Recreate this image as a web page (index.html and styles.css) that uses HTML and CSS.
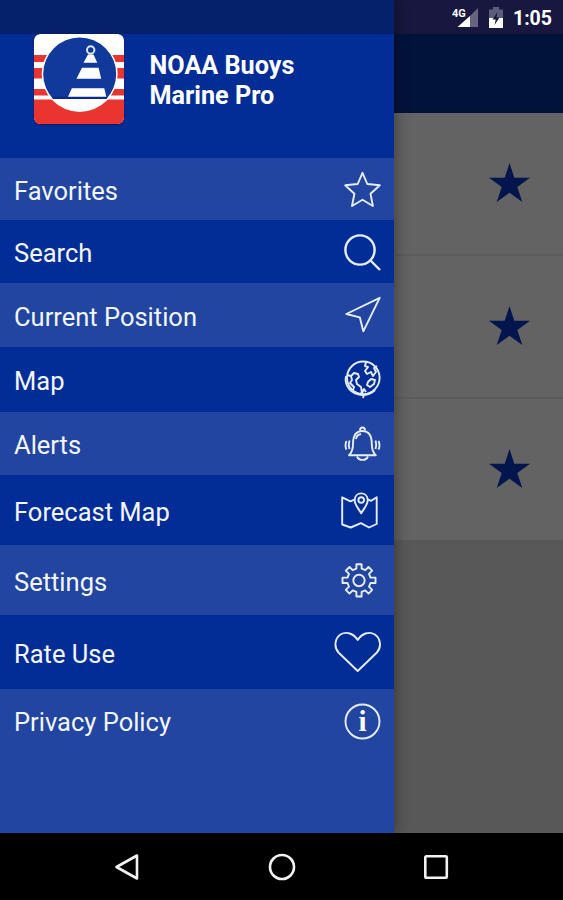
FILE: index.html
```html
<!DOCTYPE html>
<html lang="en">
<head>
  <meta charset="UTF-8">
  <title>NOAA Buoys Marine Pro</title>
  <meta name="viewport" content="width=device-width, initial-scale=1.0">
  <link rel="stylesheet" href="styles.css">
</head>
<body>

  <div class="screen">
    <div class="main">
      <div class="drawer">
        <div class="drawer-status"></div>
        <div class="drawer-header">
          <svg class="logo" viewBox="0 0 90 90">
            <defs>
              <clipPath id="tile"><rect width="90" height="90" rx="6"/></clipPath>
              <clipPath id="disc"><circle cx="45.700" cy="40" r="36.500"/></clipPath>
            </defs>
            <g clip-path="url(#tile)">
              <rect width="90" height="90" fill="#fff"/>
              <path d="M0 21h90v7H0zM0 34h90v10.500H0zM0 55h90v6.500H0zM0 65.500h90v25H0z" fill="#e93430"/>
              <circle cx="45.700" cy="40" r="38" fill="#fff"/>
              <g clip-path="url(#disc)">
                <rect width="90" height="65" fill="#10399b"/>
                <rect y="62.800" width="90" height="2.200" fill="#082a90"/>
              </g>
              <circle cx="56.700" cy="16" r="3.700" fill="none" stroke="#dfe6f7" stroke-width="2"/>
              <path d="M54 20.500h5.500l3.800 8.200H49.500zM48 33.700h16.600l2.600 11H42.500zM37.800 54.300h32.500l2 8.500H34z" fill="#fff"/>
            </g>
          </svg>
          <h1>NOAA Buoys<br>Marine Pro</h1>
        </div>

        <ul class="menu">
          <li class="item favorites">
            <span>Favorites</span>
            <svg class="icon" viewBox="0 0 48 48"><path d="M28.500 7.800l4.800 11.200 12.500 1.300-9.300 8.500 2.400 12.200-10.400-6.200-10.500 6.200 2.400-12.200-9.200-8.500 12.500-1.300z"/></svg>
          </li>
          <li class="item dark search">
            <span>Search</span>
            <svg class="icon bold" viewBox="0 0 48 48"><circle cx="26" cy="22" r="14.600"/><path d="M36.500 32.500l9.500 9.500"/></svg>
          </li>
          <li class="item position">
            <span>Current Position</span>
            <svg class="icon" viewBox="0 0 48 48"><path d="M45.700 6.800L12.300 23l13.500 3.300 3.500 14z"/></svg>
          </li>
          <li class="item dark map">
            <span>Map</span>
            <svg class="icon" viewBox="0 0 48 48">
              <circle cx="29.300" cy="21.800" r="16.300"/>
              <path d="M32 6l-1 4 3 1-3 4 2 3 4-2 2 4 3-4-2-4 3-2M34 26l3-3 4 1-1 4-4 3-3-2zM13 19l4 1 3-3 4 1 1 3-3 3 1 4 4 3 1 6 2-4 2 3M17 20l1 4-2 3 4 4-1 3"/>
              <path d="M12 20c-2 10 5 18 16 19 5 0 10-2 13-5M26 37l4 2-1 3"/>
            </svg>
          </li>
          <li class="item alerts">
            <span>Alerts</span>
            <svg class="icon" viewBox="0 0 48 48">
              <path d="M15 35.200c3-3 4-6 4-11 0-8 2.500-13.200 9.400-13.200s9.400 5.200 9.400 13.200c0 5 1 8 4 11z"/>
              <path d="M26 10.500c0-4 5-4 5 0M23 36.500c2 4.500 9 4.500 11 0M22 19c.5-3 2-4.500 5-5"/>
              <path d="M15.500 20.500c-1 3-1 6 0 8.500M12.500 21c-1.300 3-1.300 6 0 8.500M41.500 20.500c1 3 1 6 0 8.500M44.500 21c1.300 3 1.300 6 0 8.500"/>
            </svg>
          </li>
          <li class="item dark forecast">
            <span>Forecast Map</span>
            <svg class="icon" viewBox="0 0 48 48">
              <path d="M20.500 13.500l-4 1.800-8.300-4v27.200l8.500 3 10.300-4.300 8 4.300 7.700-3.500V11.300l-5.500 3.500-4-1.600"/>
              <path d="M27.200 27.300c-2-4-6.500-8-6.500-13 0-9.200 13-9.200 13 0 0 5-4.500 9-6.500 13z"/>
              <circle cx="27.200" cy="14" r="2.800"/>
            </svg>
          </li>
          <li class="item settings">
            <span>Settings</span>
            <svg class="icon" viewBox="0 0 48 48">
              <path d="M22.400 8.200h5.200v4.500l3.700 1.500 3.200-3.200 3.700 3.700-3.200 3.200 1.500 3.700h5v5.400h-5l-1.500 3.700 3.200 3.200-3.700 3.700-3.200-3.200-3.700 1.500v4.600h-5.200v-4.600l-3.700-1.500-3.200 3.200-3.700-3.700 3.200-3.200-1.500-3.700h-5v-5.400h5l1.500-3.700-3.200-3.200 3.700-3.700 3.200 3.200 3.700-1.500z"/>
              <circle cx="25" cy="24.500" r="5.700"/>
            </svg>
          </li>
          <li class="item dark rate">
            <span>Rate Use</span>
            <svg class="icon" viewBox="0 0 48 48"><path d="M23.700 43L4.500 24.500C-.5 19 1 10 6.500 6.500c6-3.500 13-1 17.200 5.500 4.200-6.500 11.200-9 17.200-5.500 5.500 3.500 7 12.500 2 18z"/></svg>
          </li>
          <li class="item privacy">
            <span>Privacy Policy</span>
            <svg class="icon" viewBox="0 0 48 48"><circle cx="28.500" cy="24.500" r="17"/><text x="28.500" y="34">i</text></svg>
          </li>
        </ul>
      </div>

      <div class="content">
        <div class="status-bar">
          <svg class="signal" viewBox="0 0 27 22">
            <path d="M26 2v19H7z" fill="#65657f"/>
            <path d="M18 10v11H5.500z" fill="#fff"/>
            <text x="0" y="11">4G</text>
          </svg>
          <svg class="battery" viewBox="0 0 14 21">
            <path d="M4 0h6v2.500h4V11H0V2.500h4z" fill="#5d5d7b"/>
            <path d="M0 11h14v10H0z" fill="#fff"/>
            <path d="M8.500 5L3.500 12.500h3.200L5.500 18l5-7.500H7.500z" fill="#171740"/>
          </svg>
          <span class="time">1:05</span>
        </div>
        <div class="toolbar"></div>
        <div class="card"><svg class="star" viewBox="0 0 41 39"><path d="M20.500 0l4.800 14.800H41L28.300 24l5 15-12.800-9.200L7.700 39l5-15L0 14.800h15.700z"/></svg></div>
        <div class="card"><svg class="star" viewBox="0 0 41 39"><path d="M20.500 0l4.800 14.800H41L28.300 24l5 15-12.800-9.200L7.700 39l5-15L0 14.800h15.700z"/></svg></div>
        <div class="card"><svg class="star" viewBox="0 0 41 39"><path d="M20.500 0l4.800 14.800H41L28.300 24l5 15-12.800-9.200L7.700 39l5-15L0 14.800h15.700z"/></svg></div>
      </div>
    </div>

    <div class="nav-bar">
      <svg viewBox="0 0 28 28"><path d="M24 2.500v23L3.500 14z"/></svg>
      <svg viewBox="0 0 28 28"><circle cx="14" cy="14" r="12"/></svg>
      <svg viewBox="0 0 28 28"><rect x="3.300" y="3.300" width="21.500" height="21.500" rx="1"/></svg>
    </div>
  </div>

</body>
</html>
```
FILE: styles.css
```css
* {
  box-sizing: border-box;
}

body {
  margin: 0;
  font-family: Roboto, sans-serif;
  background: #000;
}

.screen {
  display: flex;
  flex-direction: column;
  width: 563px;
  height: 900px;
  overflow: hidden;
}

.main {
  display: flex;
  height: 833px;
}

/* drawer */
.drawer {
  display: flex;
  flex-direction: column;
  width: 394px;
  background: #2145a0;
  box-shadow: 0 0 14px rgba(0,0,0,0.45);
  z-index: 1;
}

.drawer-status {
  height: 34px;
  background: #05216b;
}

.drawer-header {
  display: flex;
  align-items: flex-start;
  height: 124px;
  padding-left: 34px;
  background: #032d96;
}

.logo {
  width: 90px;
  height: 90px;
  border-radius: 6px;
  box-shadow: 0 1px 2px rgba(0,0,0,0.4);
}

.drawer-header h1 {
  margin: 17px 0 0 25.5px;
  font-size: 25.2px;
  line-height: 29.5px;
  font-weight: bold;
  color: #fff;
}

.menu {
  list-style: none;
  margin: 0;
  padding: 0;
}

.item {
  display: flex;
  align-items: center;
  justify-content: space-between;
  height: 63px;
  padding: 0 12px 0 14px;
  font-size: 25.5px;
  color: #f3f6ff;
}

.item span {
  padding-top: 3px;
}

.dark {
  background: #032d96;
}

.favorites {
  height: 62px;
}

.position {
  height: 64px;
}

.map {
  height: 65px;
}

.forecast,
.settings {
  height: 70px;
}

.rate {
  height: 74px;
}

.privacy {
  height: 63px;
}

.icon {
  width: 48px;
  height: 48px;
  fill: none;
  stroke: #e6edff;
  stroke-width: 1.9;
  stroke-linejoin: round;
}

.icon.bold {
  stroke-width: 2.4;
}

.icon text {
  font-family: "Liberation Serif", serif;
  font-size: 29px;
  font-weight: bold;
  text-anchor: middle;
  fill: #fff;
  stroke: none;
}

/* page behind the drawer */
.content {
  width: 169px;
  background: #585858;
}

.status-bar {
  display: flex;
  align-items: center;
  justify-content: flex-end;
  height: 34px;
  padding-right: 11px;
  background: #171740;
}

.signal {
  width: 27px;
  height: 22px;
  margin-right: 10px;
}

.signal text {
  font-size: 11px;
  font-weight: bold;
  fill: #fff;
}

.battery {
  width: 14px;
  height: 21px;
  margin-right: 10px;
}

.time {
  padding-top: 2px;
  font-size: 19.5px;
  font-weight: bold;
  color: #fff;
}

.toolbar {
  height: 79px;
  background: #02133b;
}

.card {
  display: flex;
  align-items: center;
  justify-content: flex-end;
  height: 143px;
  padding: 0 33px 2px 0;
  background: #636363;
  border-bottom: 2px solid #5c5c5c;
}

.card:last-child {
  height: 141px;
  border-bottom: none;
}

.star {
  width: 41px;
  height: 39px;
  fill: #02164d;
}

.nav-bar {
  display: flex;
  justify-content: center;
  align-items: center;
  gap: 126.5px;
  height: 67px;
  background: #000;
  z-index: 2;
}

.nav-bar svg {
  width: 28px;
  height: 28px;
  fill: none;
  stroke: #f2f2f2;
  stroke-width: 2.6;
  stroke-linejoin: round;
}
```
